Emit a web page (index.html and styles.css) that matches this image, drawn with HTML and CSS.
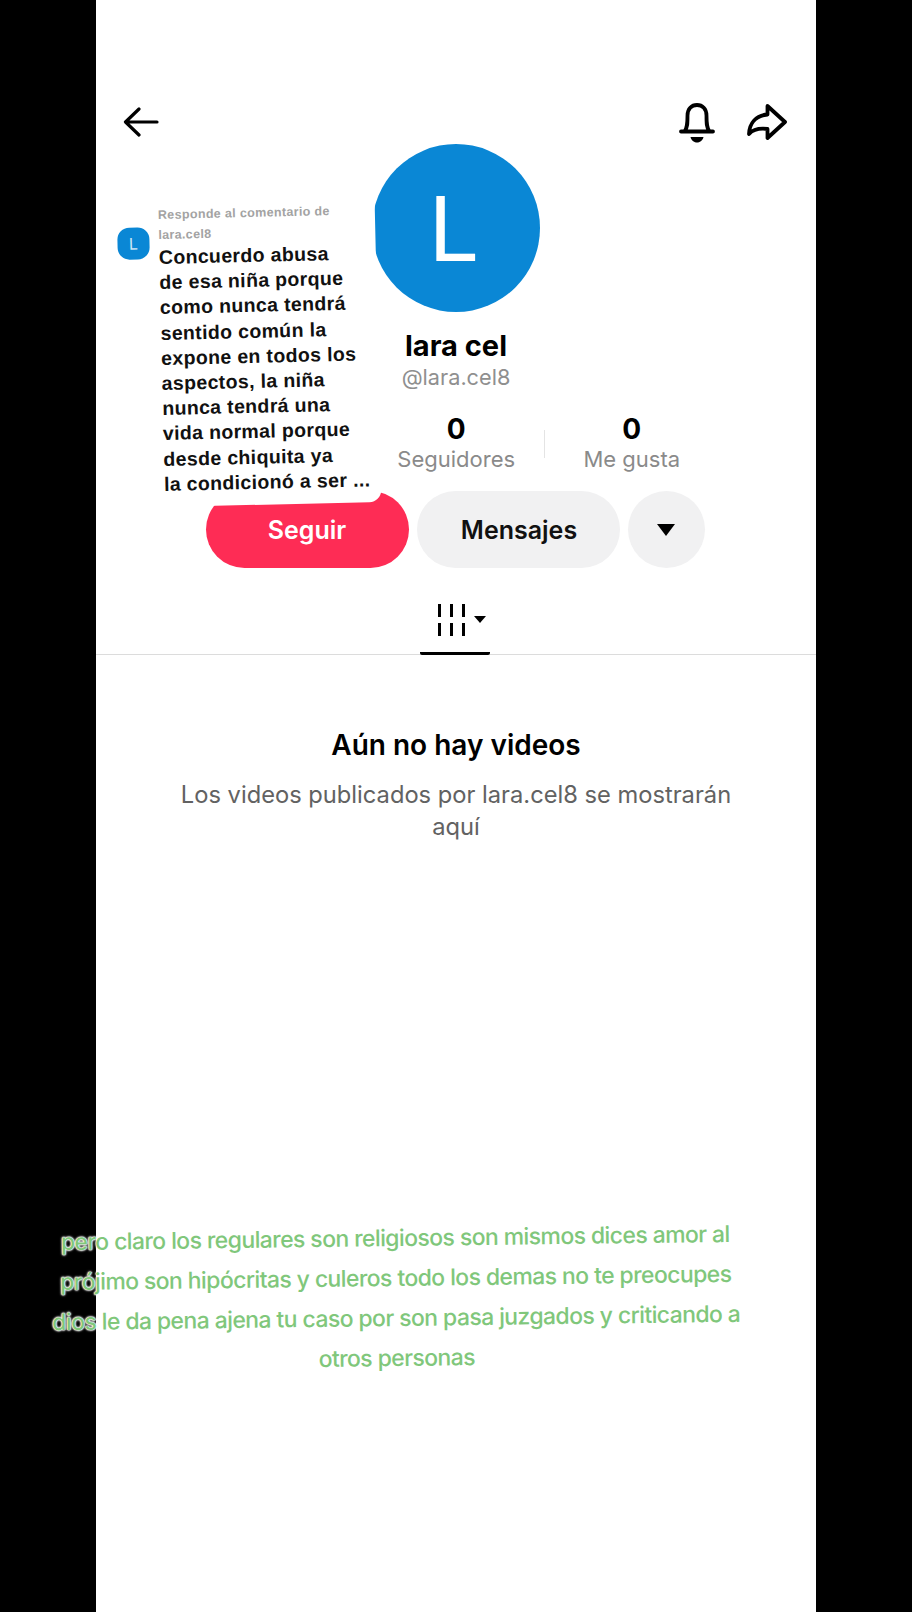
FILE: index.html
```html
<!DOCTYPE html>
<html lang="es">
<head>
    <meta charset="UTF-8">
    <meta name="viewport" content="width=device-width, initial-scale=1.0">
    <title>lara cel</title>
    <link rel="stylesheet" href="styles.css">
</head>
<body>

<div class="phone">
    <header class="topbar">
        <svg class="back-icon" width="36" height="30" viewBox="0 0 36 30" fill="none" stroke="#000" stroke-width="3.2" stroke-linecap="round" stroke-linejoin="round">
            <path d="M34 15H3M16 2 2.5 15 16 28"/>
        </svg>
        <div class="topbar-right">
            <svg width="36" height="40" viewBox="0 0 36 40" fill="none" stroke="#000" stroke-width="3.8" stroke-linecap="round" stroke-linejoin="round">
                <path d="M2 28.500H34M5.500 28.500C8.500 25 8.500 20 8.500 12.500C8.500 6 12.500 2 18 2C23.500 2 27.500 6 27.500 12.500C27.500 20 27.500 25 30.500 28.500"/>
                <path d="M11.500 34H24.500C23.500 38 20.500 39.500 18 39.500C15.500 39.500 12.500 38 11.500 34Z" fill="#000" stroke="none"/>
            </svg>
            <svg class="share-icon" width="40" height="36" viewBox="0 0 40 36" fill="none" stroke="#000" stroke-width="3.8" stroke-linejoin="round" stroke-linecap="round">
                <path d="M20.500 2 38 18 20.500 34V25C12 24 6 25.500 2 30C2.500 19 9 11.500 20.500 10.500Z"/>
            </svg>
        </div>
    </header>

    <section class="profile">
        <div class="avatar">L</div>
        <h1 class="name">lara cel</h1>
        <p class="handle">@lara.cel8</p>
        <div class="stats">
            <div class="stat">
                <strong>0</strong>
                <span>Seguidores</span>
            </div>
            <div class="stat-divider"></div>
            <div class="stat">
                <strong>0</strong>
                <span>Me gusta</span>
            </div>
        </div>
        <div class="actions">
            <button class="btn btn-follow">Seguir</button>
            <button class="btn btn-message">Mensajes</button>
            <button class="btn btn-more"><span class="caret"></span></button>
        </div>
    </section>

    <nav class="tabs">
        <div class="tab">
            <svg width="27" height="32" viewBox="0 0 27 32" fill="#000">
                <rect x="0" y="0" width="3" height="13"/>
                <rect x="12" y="0" width="3" height="13"/>
                <rect x="24" y="0" width="3" height="13"/>
                <rect x="0" y="19" width="3" height="13"/>
                <rect x="12" y="19" width="3" height="13"/>
                <rect x="24" y="19" width="3" height="13"/>
            </svg>
            <span class="caret caret-small"></span>
        </div>
    </nav>

    <section class="empty">
        <h2>Aún no hay videos</h2>
        <p>Los videos publicados por lara.cel8 se mostrarán aquí</p>
    </section>

    <aside class="reply-sticker">
        <div class="reply-avatar">L</div>
        <div class="reply-body">
            <p class="reply-label">Responde al comentario de lara.cel8</p>
            <p class="reply-text">Concuerdo abusa<br>de esa niña porque<br>como nunca tendrá<br>sentido común la<br>expone en todos los<br>aspectos, la niña<br>nunca tendrá una<br>vida normal porque<br>desde chiquita ya<br>la condicionó a ser ...</p>
        </div>
    </aside>

    <p class="caption">pero claro los regulares son religiosos son mismos dices amor al<br>prójimo son hipócritas y culeros todo los demas no te preocupes<br>dios le da pena ajena tu caso por son pasa juzgados y criticando a<br>otros personas</p>
</div>

</body>
</html>
```

FILE: styles.css
```css
* {
    box-sizing: border-box;
}
body {
    margin: 0;
    background-color: #000;
    font-family: Inter, "Noto Sans", sans-serif;
}
p, h1, h2 {
    margin: 0;
}
.phone {
    position: relative;
    width: 720px;
    height: 1612px;
    margin-left: 96px;
    background-color: #fff;
}
.topbar {
    display: flex;
    justify-content: space-between;
    align-items: flex-start;
    height: 144px;
    padding: 103px 29px 0 27px;
}
.back-icon {
    margin-top: 4px;
}
.topbar-right {
    display: flex;
    gap: 32px;
}
.share-icon {
    margin-top: 1px;
}
.profile {
    display: flex;
    flex-direction: column;
    align-items: center;
}
.avatar {
    display: flex;
    align-items: center;
    justify-content: center;
    width: 168px;
    height: 168px;
    padding-right: 4px;
    border-radius: 50%;
    background-color: #0a87d5;
    color: #fff;
    font-size: 90px;
    font-weight: 400;
}
.name {
    margin-top: 16px;
    font-size: 29px;
    font-weight: 700;
    line-height: 36px;
    color: #000;
}
.handle {
    margin-top: -1px;
    font-size: 21.700px;
    line-height: 28px;
    color: #8f8f8f;
}
.stats {
    display: flex;
    align-items: center;
    align-self: flex-start;
    margin: 22px 0 0 273px;
}
.stat {
    display: flex;
    flex-direction: column;
    align-items: center;
    width: 174.500px;
}
.stat strong {
    font-size: 28px;
    line-height: 32px;
    color: #000;
}
.stat span {
    font-size: 22px;
    line-height: 28px;
    color: #8a8a8a;
}
.stat-divider {
    width: 1px;
    height: 28px;
    margin-top: 2px;
    background-color: #e4e4e4;
}
.actions {
    display: flex;
    gap: 8px;
    margin: 18px 2px 0 0;
}
.btn {
    display: flex;
    align-items: center;
    justify-content: center;
    height: 77px;
    padding: 0;
    border: none;
    border-radius: 39px;
    font-family: inherit;
    font-size: 25px;
    font-weight: 600;
}
.btn-follow {
    width: 203px;
    background-color: #fe2c55;
    color: #fff;
}
.btn-message {
    width: 203px;
    padding-left: 2px;
    background-color: #f1f1f2;
    color: #111;
}
.btn-more {
    width: 77px;
    background-color: #f1f1f2;
}
.caret {
    display: block;
    width: 0;
    height: 0;
    border-left: 9px solid transparent;
    border-right: 9px solid transparent;
    border-top: 12px solid #000;
}
.caret-small {
    border-left-width: 6.500px;
    border-right-width: 6.500px;
    border-top-width: 7px;
    margin-left: 9px;
}
.tabs {
    display: flex;
    justify-content: center;
    height: 87px;
    padding-top: 35px;
    border-bottom: 1px solid #dcdcdc;
}
.tab {
    display: flex;
    align-items: center;
    justify-content: center;
    width: 70px;
    height: 52px;
    margin-right: 2px;
    padding: 0 0 16px 14px;
    border-bottom: 3px solid #000;
    border-radius: 0 0 2px 2px;
}
.empty {
    display: flex;
    flex-direction: column;
    align-items: center;
    padding-top: 73px;
}
.empty h2 {
    font-size: 28px;
    font-weight: 600;
    line-height: 34px;
    color: #000;
}
.empty p {
    width: 560px;
    margin-top: 17px;
    font-size: 23.700px;
    line-height: 32px;
    text-align: center;
    color: #626262;
}
.reply-sticker {
    position: absolute;
    left: 22px;
    top: 199px;
    display: flex;
    align-items: flex-start;
    gap: 9px;
    width: 260px;
    height: 306px;
    padding: 4px 0 0 2px;
    background-color: #fff;
    border-radius: 0 0 12px 12px;
    transform: rotate(-1.3deg);
}
.reply-avatar {
    display: flex;
    align-items: center;
    justify-content: center;
    flex: none;
    width: 32px;
    height: 32px;
    margin-top: 22px;
    border-radius: 12px;
    background-color: #0a87d5;
    color: #cfe8f7;
    font-size: 16px;
}
.reply-body {
    white-space: nowrap;
}
.reply-label {
    width: 190px;
    white-space: normal;
    font-family: "Liberation Sans", Arial, sans-serif;
    font-size: 12.500px;
    font-weight: 700;
    line-height: 20px;
    letter-spacing: 0.350px;
    color: #a3a3a3;
}
.reply-text {
    font-family: "Liberation Sans", Arial, sans-serif;
    font-size: 19.500px;
    font-weight: 700;
    line-height: 25.200px;
    letter-spacing: 0.350px;
    color: #111;
}
.caption {
    position: absolute;
    left: -60px;
    top: 1218px;
    width: 720px;
    font-size: 23px;
    font-weight: 500;
    line-height: 40px;
    letter-spacing: -0.600px;
    text-align: center;
    white-space: nowrap;
    color: #80c77b;
    transform: rotate(-0.7deg);
    text-shadow: 0 0 3px #fff, 0 0 2px #fff, 0 0 2px #fff, 0 0 1px #fff, 0 0 1px #fff;
}
```
